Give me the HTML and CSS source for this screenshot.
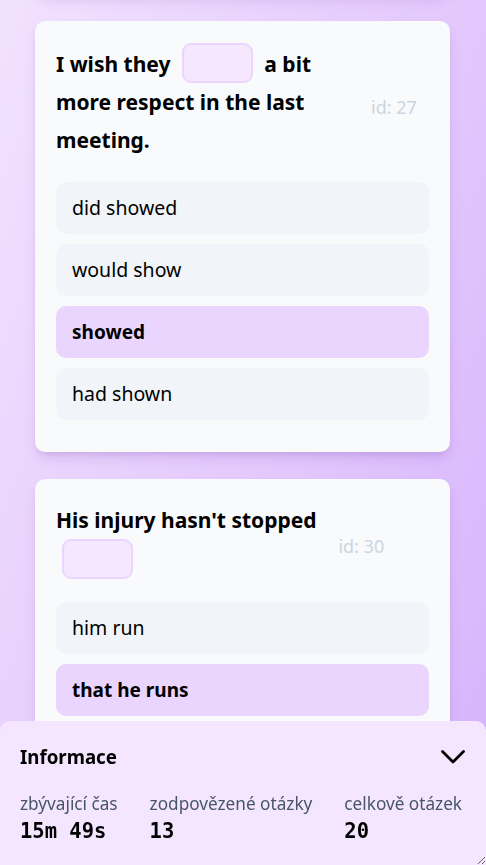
FILE: index.html
```html
<!DOCTYPE html>
<html lang="cs">
<head>
<meta charset="utf-8">
<title>Test</title>
<link rel="stylesheet" href="styles.css">
</head>
<body>
<main class="list">
  <section class="card card-prev" aria-hidden="true"></section>

  <section class="card">
    <div class="card-head">
      <p class="question">I wish they <span class="blank"></span> a bit more respect in the last meeting.</p>
      <span class="qid">id: 27</span>
    </div>
    <ul class="options">
      <li class="option">did showed</li>
      <li class="option">would show</li>
      <li class="option selected">showed</li>
      <li class="option">had shown</li>
    </ul>
  </section>

  <section class="card">
    <div class="card-head">
      <p class="question">His injury hasn't stopped <span class="blank"></span></p>
      <span class="qid">id: 30</span>
    </div>
    <ul class="options">
      <li class="option">him run</li>
      <li class="option selected">that he runs</li>
    </ul>
  </section>
</main>

<aside class="info">
  <div class="info-head">
    <h2 class="info-title">Informace</h2>
    <svg class="chev" width="24" height="14" viewBox="0 0 24 14" aria-hidden="true">
      <polyline points="1.5,1.5 12,12 22.5,1.5" fill="none" stroke="#000" stroke-width="2.8" stroke-linecap="round" stroke-linejoin="round"/>
    </svg>
  </div>
  <div class="stats">
    <div class="stat">
      <div class="stat-label">zbývající čas</div>
      <div class="stat-value">15m 49s</div>
    </div>
    <div class="stat">
      <div class="stat-label">zodpovězené otázky</div>
      <div class="stat-value">13</div>
    </div>
    <div class="stat">
      <div class="stat-label">celkově otázek</div>
      <div class="stat-value">20</div>
    </div>
  </div>
</aside>
</body>
</html>
```
FILE: styles.css
```css
html, body {
  margin: 0;
  padding: 0;
  height: 100%;
  overflow: hidden;
}
body {
  font-family: "Noto Sans", "Open Sans", sans-serif;
  color: #000;
  background: linear-gradient(112deg, #f1e2fe 0%, #e6cdfd 45%, #d6b2fc 100%);
}

.list {
  width: 415px;
  margin: 0 0 0 35px;
  display: flex;
  flex-direction: column;
  gap: 27px;
}

.card {
  background: #f8fafc;
  border-radius: 10px;
  padding: 22px 21px 32px;
  box-shadow: 0 8px 14px -4px rgba(120, 60, 170, 0.22), 0 3px 6px -3px rgba(120, 60, 170, 0.18);
}
.card-prev {
  height: 40px;
  margin-top: -99px;
  padding-bottom: 31px;
}

.card-head {
  display: flex;
  align-items: center;
}
.question {
  margin: 0;
  flex: 0 1 auto;
  min-width: 0;
  font-size: 21px;
  font-weight: 700;
  line-height: 38px;
}
.blank {
  display: inline-block;
  width: 71px;
  height: 40px;
  box-sizing: border-box;
  margin: 0 6px;
  vertical-align: -11px;
  background: #f5e8fe;
  border: 2px solid #ead6fe;
  border-radius: 9px;
}
.qid {
  flex: 0 1 112px;
  min-width: 0;
  white-space: nowrap;
  padding-top: 11px;
  font-size: 18px;
  color: #cbd5e1;
}

.options {
  list-style: none;
  margin: 23px 0 0;
  padding: 0;
  display: flex;
  flex-direction: column;
  gap: 10px;
}
.option {
  background: #f1f5f9;
  border-radius: 10px;
  padding: 12px 16px;
  font-size: 19.5px;
  line-height: 28px;
}
.option.selected {
  background: #ead5fe;
  font-weight: 700;
  font-size: 19px;
}

.info {
  position: fixed;
  left: 0;
  right: 0;
  bottom: 0;
  height: 144px;
  box-sizing: border-box;
  padding: 22px 21px 0 20px;
  background: #f4e6fe;
  border-radius: 10px 10px 0 0;
  overflow: auto;
  resize: both;
}
.info-head {
  display: flex;
  align-items: center;
  justify-content: space-between;
  height: 28px;
}
.info-title {
  margin: 0;
  font-size: 18.7px;
  font-weight: 700;
  line-height: 28px;
}
.chev {
  display: block;
}
.stats {
  display: flex;
  gap: 32px;
  margin-top: 21px;
}
.stat-label {
  font-size: 17.2px;
  line-height: 24px;
  color: #475569;
}
.stat-value {
  margin-top: 1px;
  font-family: "DejaVu Sans Mono", monospace;
  font-weight: 700;
  font-size: 20.5px;
  line-height: 28px;
}
```
